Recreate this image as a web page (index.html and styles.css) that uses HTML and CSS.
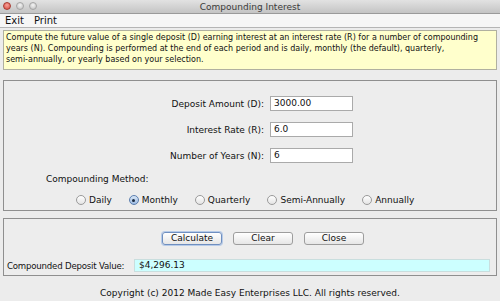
FILE: index.html
```html
<!DOCTYPE html>
<html lang="en">
<head>
    <meta charset="UTF-8">
    <title>Compounding Interest</title>
    <link rel="stylesheet" href="styles.css">
</head>
<body>

<div class="window">
    <div class="titlebar">
        <div class="lights">
            <span class="light red"></span>
            <span class="light"></span>
            <span class="light"></span>
        </div>
        <div class="title">Compounding Interest</div>
    </div>

    <div class="menubar">
        <span>Exit</span>
        <span>Print</span>
    </div>

    <div class="content">
        <div class="info">
            Compute the future value of a single deposit (D) earning interest at an interest rate (R) for a number of compounding<br>
            years (N). Compounding is performed at the end of each period and is daily, monthly (the default), quarterly,<br>
            semi-annually, or yearly based on your selection.
        </div>

        <div class="panel inputs">
            <div class="field-row">
                <label>Deposit Amount (D):</label>
                <div class="textbox">3000.00</div>
            </div>
            <div class="field-row">
                <label>Interest Rate (R):</label>
                <div class="textbox">6.0</div>
            </div>
            <div class="field-row">
                <label>Number of Years (N):</label>
                <div class="textbox">6</div>
            </div>
            <div class="method-label">Compounding Method:</div>
            <div class="radios">
                <span class="radio"><span class="dot"></span>Daily</span>
                <span class="radio checked"><span class="dot"></span>Monthly</span>
                <span class="radio"><span class="dot"></span>Quarterly</span>
                <span class="radio"><span class="dot"></span>Semi-Annually</span>
                <span class="radio"><span class="dot"></span>Annually</span>
            </div>
        </div>

        <div class="panel actions">
            <div class="buttons">
                <span class="button default">Calculate</span>
                <span class="button">Clear</span>
                <span class="button">Close</span>
            </div>
            <div class="result-row">
                <span class="result-label">Compounded Deposit Value:</span>
                <div class="result">$4,296.13</div>
            </div>
        </div>

        <div class="copyright">Copyright (c) 2012 Made Easy Enterprises LLC. All rights reserved.</div>
    </div>
</div>

</body>
</html>
```

FILE: styles.css
```css
body {
    margin: 0;
    background-color: #ececec;
    font-family: "DejaVu Sans", sans-serif;
    font-size: 9px;
    color: #111;
}
.window {
    width: 500px;
    height: 301px;
    background-color: #ececec;
}
.titlebar {
    height: 13px;
    position: relative;
    background: linear-gradient(#e2e2e2, #c4c4c4);
    border-bottom: 1px solid #9a9a9a;
    display: flex;
    align-items: center;
    justify-content: center;
}
.lights {
    position: absolute;
    left: 3px;
    top: 2px;
    display: flex;
    gap: 5px;
}
.light {
    width: 8px;
    height: 8px;
    border-radius: 50%;
    background: radial-gradient(circle at 50% 35%, #f4f4f4, #bdbdbd);
    border: 1px solid #a5a5a5;
    box-sizing: border-box;
}
.light.red {
    background: radial-gradient(circle at 50% 35%, #f7a29a, #d8493d);
    border-color: #a8382e;
}
.title {
    font-size: 9px;
    color: #3a3a3a;
}
.menubar {
    height: 13px;
    background-color: #f6f6f6;
    border-bottom: 1px solid #b5b5b5;
    display: flex;
    align-items: center;
    gap: 10px;
    padding-left: 5px;
    font-size: 10px;
}
.content {
    padding: 0 3px;
}
.info {
    margin-top: 2px;
    height: 40px;
    box-sizing: border-box;
    background-color: #ffffcc;
    border: 1px solid #b0b0a0;
    padding: 1px 2px;
    line-height: 11px;
    font-size: 8px;
    white-space: nowrap;
    overflow: hidden;
}
.panel {
    border: 1px solid #8f8f8f;
    box-sizing: border-box;
    background-color: #ededed;
}
.inputs {
    margin-top: 10px;
    height: 131px;
    padding-top: 15px;
}
.field-row {
    display: flex;
    align-items: center;
    height: 15px;
    margin-bottom: 11px;
}
.field-row label {
    width: 260px;
    text-align: right;
    padding-right: 6px;
}
.textbox {
    width: 83px;
    height: 15px;
    box-sizing: border-box;
    background-color: #fff;
    border: 1px solid #aaa;
    padding-left: 3px;
    line-height: 13px;
}
.method-label {
    margin-left: 42px;
    margin-top: 2px;
}
.radios {
    display: flex;
    margin-top: 11px;
    padding-left: 72px;
    gap: 17px;
}
.radio {
    display: flex;
    align-items: center;
    gap: 3px;
}
.dot {
    width: 10px;
    height: 10px;
    border-radius: 50%;
    box-sizing: border-box;
    border: 1px solid #9a9a9a;
    background: linear-gradient(#ffffff, #e4e4e4);
    display: flex;
    align-items: center;
    justify-content: center;
}
.radio.checked .dot {
    border-color: #5c7fb0;
    background: linear-gradient(#d8e6f6, #9dbbe2);
}
.radio.checked .dot::after {
    content: "";
    width: 3px;
    height: 3px;
    border-radius: 50%;
    background-color: #1a2a40;
}
.actions {
    margin-top: 7px;
    height: 58px;
    padding-top: 13px;
}
.buttons {
    display: flex;
    justify-content: center;
    gap: 11px;
    padding-left: 26px;
}
.button {
    width: 60px;
    height: 13px;
    box-sizing: border-box;
    border: 1px solid #9d9d9d;
    border-radius: 3px;
    background: linear-gradient(#ffffff, #e6e6e6);
    text-align: center;
    line-height: 11px;
}
.button.default {
    border-color: #6f8fc0;
    box-shadow: 0 0 0 1px #b7cbe8;
}
.result-row {
    display: flex;
    align-items: center;
    margin-top: 14px;
    padding-left: 3px;
}
.result-label {
    width: 127px;
    flex-shrink: 0;
    white-space: nowrap;
    font-size: 8.6px;
    letter-spacing: -0.2px;
}
.result {
    width: 356px;
    height: 13px;
    background-color: #ccffff;
    border: 1px solid #c9dede;
    box-sizing: border-box;
    line-height: 11px;
    padding-left: 4px;
}
.copyright {
    text-align: center;
    margin-top: 12px;
}
```
